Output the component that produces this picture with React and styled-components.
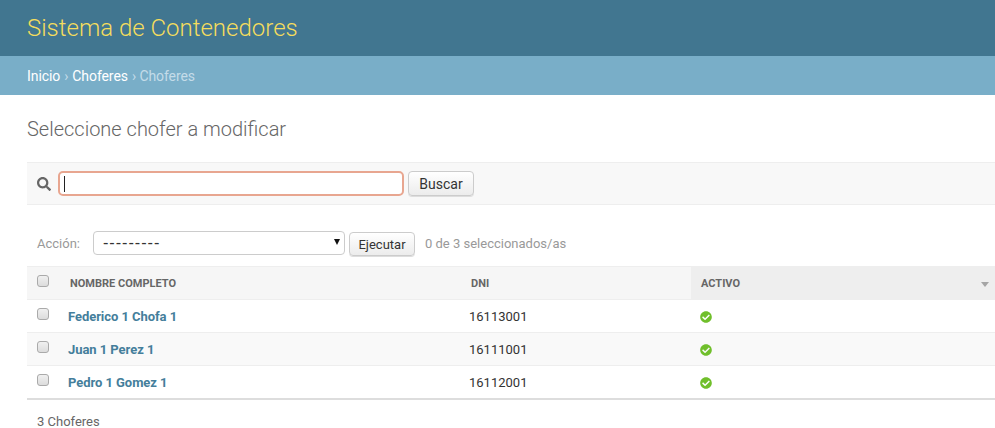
import React from 'react'
import styled, { createGlobalStyle } from 'styled-components'
import { FaSearch, FaCheckCircle } from 'react-icons/fa'

const GlobalStyle = createGlobalStyle`
    html, body {
        margin: 0;
        padding: 0;
        background: #fff;
        overflow: hidden;
    }
    body {
        font-family: Roboto, "Lucida Grande", Verdana, Arial, sans-serif;
        font-size: 14px;
        color: #333;
    }
`

const Page = styled.div`
    width: 995px;
    height: 428px;
    overflow: hidden;
`

const Header = styled.header`
    height: 56px;
    padding: 0 27px;
    display: flex;
    align-items: center;
    background: #417690;
`

const Branding = styled.h1`
    margin: 0;
    font-size: 24px;
    font-weight: 300;
    color: #f5dd5d;
`

const Breadcrumbs = styled.nav`
    height: 39px;
    padding: 0 27px;
    display: flex;
    align-items: center;
    gap: 4px;
    background: #79aec8;
    font-size: 14px;
    letter-spacing: -0.08px;
    color: #c4dce8;
`

const Crumb = styled.a`
    color: #fff;
`

const Content = styled.main`
    padding: 23px 0 0 27px;
`

const Title = styled.h2`
    margin: 0 0 21px;
    font-size: 20px;
    line-height: 23px;
    font-weight: 300;
    color: #666;
`

const Toolbar = styled.div`
    height: 41px;
    padding: 0 0 0 10px;
    display: flex;
    align-items: center;
    gap: 4px;
    background: #f8f8f8;
    border-top: 1px solid #eee;
    border-bottom: 1px solid #eee;
`

const SearchIcon = styled(FaSearch)`
    width: 14px;
    height: 14px;
    margin-right: 3px;
    color: #666;
`

const SearchBox = styled.div`
    position: relative;
    width: 346px;
    height: 25px;
`

const SearchInput = styled.input`
    box-sizing: border-box;
    width: 100%;
    height: 100%;
    padding: 2px 5px;
    background: #fff;
    border: 2px solid #e8a690;
    border-radius: 5px;
    outline: none;
    caret-color: transparent;
`

const Caret = styled.span`
    position: absolute;
    left: 6px;
    top: 5px;
    width: 1px;
    height: 16px;
    background: #222;
`

const Button = styled.button`
    box-sizing: border-box;
    min-width: 66px;
    height: ${(p) => p.$height}px;
    margin-top: ${(p) => 25 - p.$height}px;
    padding: 0;
    background: linear-gradient(#fff, #ececec);
    border: 1px solid #ccc;
    border-radius: 4px;
    box-shadow: 0 1px 0 #ddd;
    font-family: inherit;
    font-size: ${(p) => p.$size}px;
    color: #333;
`

const Actions = styled.div`
    height: 25px;
    margin-top: 26px;
    padding-left: 10px;
    display: flex;
    align-items: center;
    font-size: 13px;
    color: #999;
`

const ActionLabel = styled.label`
    width: 56px;
`

const SelectBox = styled.div`
    position: relative;
    width: 252px;
    height: 25px;
    margin-right: 4px;
`

const Select = styled.select`
    appearance: none;
    box-sizing: border-box;
    width: 100%;
    height: 24px;
    padding: 0 9px;
    background: #fff;
    border: 1px solid #ccc;
    border-radius: 4px;
    font-family: "DejaVu Sans", sans-serif;
    font-size: 15px;
    letter-spacing: 0.95px;
    color: #333;
`

const SelectArrow = styled.span`
    position: absolute;
    right: 5px;
    top: 8px;
    border-left: 3px solid transparent;
    border-right: 3px solid transparent;
    border-top: 6px solid #111;
`

const Counter = styled.span`
    margin-left: 10px;
    font-size: 13px;
`

const Table = styled.table`
    box-sizing: border-box;
    width: 968px;
    margin-top: 10px;
    border-collapse: separate;
    border-spacing: 0;
    table-layout: fixed;
`

const Th = styled.th`
    height: 34px;
    padding: 0 0 0 ${(p) => p.$pad}px;
    position: relative;
    box-sizing: border-box;
    text-align: left;
    vertical-align: middle;
    background: ${(p) => (p.$sorted ? '#eee' : '#f6f6f6')};
    border-top: 1px solid #eee;
    border-bottom: 1px solid #eee;
    font-size: 11px;
    font-weight: 700;
    color: #666;
`

const SortArrow = styled.span`
    position: absolute;
    right: 6px;
    top: 15px;
    border-left: 4px solid transparent;
    border-right: 4px solid transparent;
    border-top: 5px solid #a5a5a5;
`

const Td = styled.td`
    height: 33px;
    padding: 0 0 0 ${(p) => p.$pad}px;
    box-sizing: border-box;
    vertical-align: middle;
    border-bottom: 1px solid #eee;
    font-size: 13px;
    color: #333;
`

const Row = styled.tr`
    background: ${(p) => (p.$alt ? '#f9f9f9' : '#fff')};

    &:last-child ${Td} {
        height: 34px;
        border-bottom: 2px solid #ddd;
    }
`

const NameLink = styled.a`
    font-weight: 700;
    letter-spacing: -0.05px;
    color: #447e9b;
`

const CheckBox = styled.input.attrs({ type: 'checkbox' })`
    appearance: none;
    display: block;
    width: 12px;
    height: 12px;
    margin: 0 0 4px;
    background: linear-gradient(#f0f0f0, #dcdcdc);
    border: 1px solid #aaa;
    border-radius: 3px;
`

const YesIcon = styled(FaCheckCircle)`
    display: block;
    width: 12px;
    height: 12px;
    margin-top: 2px;
    color: #70bf2b;
`

const Paginator = styled.p`
    margin: 14px 0 0;
    padding-left: 10px;
    font-size: 13px;
    color: #666;
`

const choferes = [
    { name: 'Federico 1 Chofa 1', dni: '16113001' },
    { name: 'Juan 1 Perez 1', dni: '16111001' },
    { name: 'Pedro 1 Gomez 1', dni: '16112001' },
]

export default function App() {
    return (
        <Page>
            <GlobalStyle />
            <Header>
                <Branding>Sistema de Contenedores</Branding>
            </Header>
            <Breadcrumbs>
                <Crumb>Inicio</Crumb> › <Crumb>Choferes</Crumb> › Choferes
            </Breadcrumbs>
            <Content>
                <Title>Seleccione chofer a modificar</Title>
                <Toolbar>
                    <SearchIcon />
                    <SearchBox>
                        <SearchInput type="text" />
                        <Caret />
                    </SearchBox>
                    <Button $height={25} $size={14}>Buscar</Button>
                </Toolbar>
                <Actions>
                    <ActionLabel>Acción:</ActionLabel>
                    <SelectBox>
                        <Select defaultValue="">
                            <option value="">---------</option>
                        </Select>
                        <SelectArrow />
                    </SelectBox>
                    <Button $height={24} $size={13}>Ejecutar</Button>
                    <Counter>0 de 3 seleccionados/as</Counter>
                </Actions>
                <Table>
                    <colgroup>
                        <col style={{ width: 33 }} />
                        <col style={{ width: 401 }} />
                        <col style={{ width: 230 }} />
                        <col />
                    </colgroup>
                    <thead>
                        <tr>
                            <Th $pad={10}><CheckBox /></Th>
                            <Th $pad={10}>NOMBRE COMPLETO</Th>
                            <Th $pad={10}>DNI</Th>
                            <Th $pad={10} $sorted>ACTIVO<SortArrow /></Th>
                        </tr>
                    </thead>
                    <tbody>
                        {choferes.map((c, i) => (
                            <Row key={c.dni} $alt={i % 2 === 1}>
                                <Td $pad={10}><CheckBox /></Td>
                                <Td $pad={8}><NameLink>{c.name}</NameLink></Td>
                                <Td $pad={8}>{c.dni}</Td>
                                <Td $pad={9}><YesIcon /></Td>
                            </Row>
                        ))}
                    </tbody>
                </Table>
                <Paginator>3 Choferes</Paginator>
            </Content>
        </Page>
    )
}
